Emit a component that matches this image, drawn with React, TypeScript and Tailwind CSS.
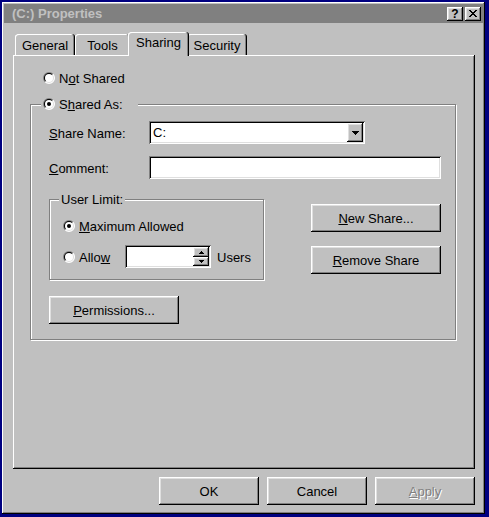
import React from "react";

const raised =
  "shadow-[inset_-1px_-1px_0_#000,inset_1px_1px_0_#fff,inset_-2px_-2px_0_#808080,inset_2px_2px_0_#dfdfdf]";
const sunken =
  "shadow-[inset_1px_1px_0_#808080,inset_-1px_-1px_0_#fff,inset_2px_2px_0_#000,inset_-2px_-2px_0_#dfdfdf]";
const etched = "border border-[#808080] shadow-[inset_1px_1px_0_#fff,1px_1px_0_#fff]";

function half(r: number, tl: boolean) {
  const d = r * Math.SQRT1_2;
  return tl
    ? `M${6 - d},${6 + d} A${r},${r} 0 0 1 ${6 + d},${6 - d} Z`
    : `M${6 + d},${6 - d} A${r},${r} 0 0 1 ${6 - d},${6 + d} Z`;
}

function Radio({ checked }: { checked?: boolean }) {
  return (
    <svg width="12" height="12" viewBox="0 0 12 12" className="shrink-0 block">
      <path d={half(6, true)} fill="#808080" />
      <path d={half(6, false)} fill="#ffffff" />
      <path d={half(5, true)} fill="#000000" />
      <path d={half(5, false)} fill="#dfdfdf" />
      <circle cx="6" cy="6" r="4" fill="#ffffff" />
      {checked && <circle cx="6" cy="6" r="2" fill="#000000" />}
    </svg>
  );
}

function Tab({ label, cls, selected }: { label: string; cls: string; selected?: boolean }) {
  if (selected) {
    return (
      <div
        className={`relative z-10 -mx-[2px] -mb-[1px] h-[24px] bg-[#c0c0c0] rounded-t-[3px] flex items-center justify-center pb-[2px] shadow-[inset_-1px_0_0_#000,inset_1px_1px_0_#fff,inset_-2px_0_0_#808080] ${cls}`}
      >
        {label}
      </div>
    );
  }
  return (
    <div
      className={`h-[21px] bg-[#c0c0c0] rounded-t-[3px] flex items-center justify-center pt-[2px] shadow-[inset_-1px_0_0_#000,inset_1px_1px_0_#fff,inset_-2px_0_0_#808080] ${cls}`}
    >
      {label}
    </div>
  );
}

function Btn({ children, cls }: { children: React.ReactNode; cls: string }) {
  return (
    <div className={`bg-[#c0c0c0] ${raised} flex items-center justify-center pt-[2px] ${cls}`}>{children}</div>
  );
}

function DownArrow() {
  return (
    <svg width="7" height="4" viewBox="0 0 7 4" className="block" shapeRendering="crispEdges">
      <path d="M0 0H7V1H6V2H5V3H4V4H3V3H2V2H1V1H0Z" fill="#000" />
    </svg>
  );
}

function SmallArrow({ up }: { up?: boolean }) {
  return (
    <svg width="5" height="3" viewBox="0 0 5 3" className="block" shapeRendering="crispEdges">
      {up ? (
        <path d="M2 0H3V1H4V2H5V3H0V2H1V1H2Z" fill="#000" />
      ) : (
        <path d="M0 0H5V1H4V2H3V3H2V2H1V1H0Z" fill="#000" />
      )}
    </svg>
  );
}

function CloseGlyph() {
  return (
    <svg width="8" height="7" viewBox="0 0 8 7" className="block" shapeRendering="crispEdges">
      <path
        d="M0 0H2V1H3V2H5V1H6V0H8V1H7V2H6V3H5V4H6V5H7V6H8V7H6V6H5V5H3V6H2V7H0V6H1V5H2V4H3V3H2V2H1V1H0Z"
        fill="#000"
      />
    </svg>
  );
}

export default function App() {
  return (
    <div className="w-[489px] h-[517px] bg-[#000080] pt-[2px] pl-[2px] font-['Liberation_Sans',Arial,sans-serif] text-[13px] leading-[16px] text-black">
      <div className="w-[483px] h-[512px] bg-[#c0c0c0] p-[2px] flex flex-col shadow-[inset_-1px_-1px_0_#000,inset_1px_1px_0_#fff,inset_-2px_-2px_0_#808080]">
        {/* Title bar */}
        <div className="h-[19px] bg-[#808080] flex items-center pl-[8px] pr-[2px]">
          <span className="font-bold text-[#c0c0c0] pt-[1px]">(C:) Properties</span>
          <div className="ml-auto flex gap-[2px]">
            <div className={`w-[16px] h-[14px] bg-[#c0c0c0] ${raised} flex items-center justify-center`}>
              <span className="font-bold text-[12px] leading-none pt-[1px]">?</span>
            </div>
            <div className={`w-[16px] h-[14px] bg-[#c0c0c0] ${raised} flex items-center justify-center`}>
              <CloseGlyph />
            </div>
          </div>
        </div>

        {/* Body */}
        <div className="pl-[9px] mt-[9px] flex flex-col">
          <div className="flex items-end h-[23px] pl-[2px]">
            <Tab label="General" cls="w-[60px]" />
            <Tab label="Tools" cls="w-[55px]" />
            <Tab label="Sharing" cls="w-[61px]" selected />
            <Tab label="Security" cls="w-[60px]" />
          </div>

          <div className="w-[462px] h-[414px] bg-[#c0c0c0] pt-[1px] pl-[1px] flex flex-col shadow-[inset_-1px_-1px_0_#000,inset_1px_1px_0_#fff,inset_-2px_-2px_0_#808080]">
            <div className="ml-[29px] mt-[14px] h-[16px] flex items-center gap-[4px]">
              <Radio />
              <span className="pt-[2px]">
                N<u>o</u>t Shared
              </span>
            </div>

            <div className={`relative ml-[16px] mt-[18px] w-[426px] h-[236px] ${etched}`}>
              <div className="absolute left-[10px] -top-[9px] h-[16px] w-[97px] pl-[2px] bg-[#c0c0c0] flex items-center gap-[4px]">
                <Radio checked />
                <span className="pt-[2px]">
                  S<u>h</u>ared As:
                </span>
              </div>

              <div className="pl-[18px] pt-[16px] flex flex-col">
                <div className="h-[23px] flex items-center">
                  <span className="w-[100px] pt-[2px]">
                    <u>S</u>hare Name:
                  </span>
                  <div className={`w-[216px] h-[23px] bg-white ${sunken} p-[2px] flex`}>
                    <div className="flex-1 flex items-center pl-[2px] pt-[1px]">C:</div>
                    <div className={`w-[16px] h-full bg-[#c0c0c0] ${raised} flex items-center justify-center`}>
                      <DownArrow />
                    </div>
                  </div>
                </div>

                <div className="mt-[12px] h-[23px] flex items-center">
                  <span className="w-[100px] pt-[2px]">
                    <u>C</u>omment:
                  </span>
                  <div className={`w-[292px] h-[23px] bg-white ${sunken}`} />
                </div>

                <div className="mt-[20px] flex">
                  <div className={`relative w-[215px] h-[81px] ${etched}`}>
                    <div className="absolute left-[9px] -top-[9px] h-[16px] px-[2px] bg-[#c0c0c0] flex items-center">
                      <span className="pt-[2px]">User Limit:</span>
                    </div>
                    <div className="pl-[13px] pt-[18px] flex flex-col">
                      <div className="h-[16px] flex items-center gap-[4px]">
                        <Radio checked />
                        <span className="pt-[2px]">
                          <u>M</u>aximum Allowed
                        </span>
                      </div>
                      <div className="mt-[11px] h-[23px] flex items-center">
                        <Radio />
                        <span className="ml-[4px] w-[46px] pt-[2px]">
                          Allo<u>w</u>
                        </span>
                        <div className={`w-[86px] h-[23px] bg-white ${sunken} p-[2px] flex justify-end`}>
                          <div className="w-[16px] h-full flex flex-col">
                            <div className={`h-[10px] bg-[#c0c0c0] ${raised} flex items-center justify-center`}>
                              <SmallArrow up />
                            </div>
                            <div className={`h-[9px] bg-[#c0c0c0] ${raised} flex items-center justify-center`}>
                              <SmallArrow />
                            </div>
                          </div>
                        </div>
                        <span className="ml-[6px] pt-[2px]">Users</span>
                      </div>
                    </div>
                  </div>

                  <div className="ml-[47px] pt-[5px] flex flex-col gap-[14px]">
                    <Btn cls="w-[130px] h-[28px]">
                      <span>
                        <u>N</u>ew Share...
                      </span>
                    </Btn>
                    <Btn cls="w-[130px] h-[28px]">
                      <span>
                        <u>R</u>emove Share
                      </span>
                    </Btn>
                  </div>
                </div>

                <div className="mt-[16px]">
                  <Btn cls="w-[130px] h-[28px]">
                    <span>
                      <u>P</u>ermissions...
                    </span>
                  </Btn>
                </div>
              </div>
            </div>
          </div>

          <div className="mt-[8px] w-[462px] flex justify-end gap-[8px]">
            <Btn cls="w-[100px] h-[28px]">OK</Btn>
            <Btn cls="w-[100px] h-[28px]">Cancel</Btn>
            <Btn cls="w-[100px] h-[28px]">
              <span className="text-[#808080] [text-shadow:1px_1px_0_#fff]">
                <u>A</u>pply
              </span>
            </Btn>
          </div>
        </div>
      </div>
    </div>
  );
}
